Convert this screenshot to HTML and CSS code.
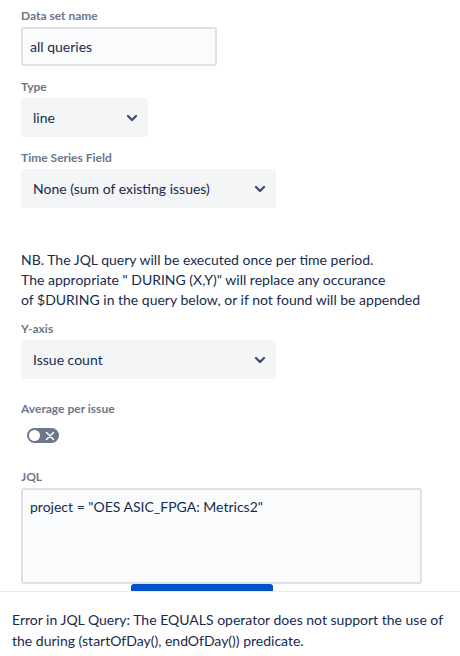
FILE: index.html
```html
<!DOCTYPE html>
<html>
<head>
<meta charset="utf-8">
<link rel="stylesheet" href="styles.css">
</head>
<body>
<div class="form">
  <div class="field first">
    <div class="label">Data set name</div>
    <div class="input">all queries</div>
  </div>
  <div class="field">
    <div class="label">Type</div>
    <div class="select narrow"><span>line</span><svg class="chev" width="24" height="24" viewBox="0 0 24 24"><path d="M8 10 L12 14 L16 10" fill="none" stroke="#42526e" stroke-width="2.4" stroke-linecap="round" stroke-linejoin="round"/></svg></div>
  </div>
  <div class="field">
    <div class="label">Time Series Field</div>
    <div class="select wide"><span>None (sum of existing issues)</span><svg class="chev" width="24" height="24" viewBox="0 0 24 24"><path d="M8 10 L12 14 L16 10" fill="none" stroke="#42526e" stroke-width="2.4" stroke-linecap="round" stroke-linejoin="round"/></svg></div>
  </div>
  <p class="note">NB. The JQL query will be executed once per time period.<br>The appropriate " DURING (X,Y)" will replace any occurance<br>of $DURING in the query below, or if not found will be appended</p>
  <div class="field yaxis">
    <div class="label">Y-axis</div>
    <div class="select wide"><span>Issue count</span><svg class="chev" width="24" height="24" viewBox="0 0 24 24"><path d="M8 10 L12 14 L16 10" fill="none" stroke="#42526e" stroke-width="2.4" stroke-linecap="round" stroke-linejoin="round"/></svg></div>
  </div>
  <div class="field avg">
    <div class="label">Average per issue</div>
    <div class="toggle-wrap">
      <span class="toggle"><span class="knob"></span><svg class="x" width="10" height="10" viewBox="0 0 10 10"><path d="M1.5 1.5 L8.5 8.5 M8.5 1.5 L1.5 8.5" stroke="#fff" stroke-width="1.6" stroke-linecap="round"/></svg></span>
    </div>
  </div>
  <div class="field jql">
    <div class="label">JQL</div>
    <div class="textarea">project = "OES ASIC_FPGA: Metrics2"</div>
  </div>
  <div class="btn-row"><span class="btn"></span></div>
</div>
<div class="footer">Error in JQL Query: The EQUALS operator does not support the use of the during (startOfDay(), endOfDay()) predicate.</div>
</body>
</html>
```
FILE: styles.css
```css
html, body {
  margin: 0;
  padding: 0;
  background: #ffffff;
}
body {
  font-family: "Lato", "Noto Sans", sans-serif;
  font-size: 14px;
  color: #172b4d;
  width: 460px;
  height: 656px;
  overflow: hidden;
}
.form {
  height: 591px;
  overflow: hidden;
  padding: 8px 21px 0;
  box-sizing: border-box;
}
.field {
  margin-top: 13px;
}
.field.first {
  margin-top: 0;
}
.label {
  font-size: 12px;
  line-height: 16px;
  font-weight: 700;
  color: #6b778c;
  margin-bottom: 3px;
}
.input {
  width: 196px;
  height: 39px;
  box-sizing: border-box;
  border: 2px solid #dfe1e6;
  border-radius: 3px;
  background: #fafbfc;
  padding: 0 7px;
  display: flex;
  align-items: center;
}
.select {
  height: 39px;
  box-sizing: border-box;
  border-radius: 3px;
  background: #f4f5f7;
  padding: 0 4px 0 12px;
  display: flex;
  align-items: center;
  justify-content: space-between;
}
.select.narrow { width: 127px; }
.select.wide { width: 255px; }
.chev { flex: none; }
.note {
  margin: 42px 0 0;
  line-height: 20px;
  color: #172b4d;
}
.field.yaxis { margin-top: 11px; }
.field.avg { margin-top: 22px; }
.toggle-wrap {
  padding: 7px 0 0 6px;
  height: 22px;
}
.toggle {
  display: inline-flex;
  align-items: center;
  justify-content: space-between;
  width: 32px;
  height: 15px;
  border-radius: 8px;
  background: #6b778c;
  padding: 0 4px 0 2px;
  box-sizing: border-box;
}
.knob {
  width: 11px;
  height: 11px;
  border-radius: 50%;
  background: #fff;
}
.field.jql { margin-top: 20px; }
.textarea {
  width: 401px;
  height: 96px;
  box-sizing: border-box;
  border: 2px solid #dfe1e6;
  border-radius: 3px;
  background: #fafbfc;
  padding: 7px 7px;
  line-height: 20px;
}
.btn-row {
  padding-left: 110px;
}
.btn {
  display: block;
  width: 142px;
  height: 32px;
  background: #0052cc;
  border-radius: 3px;
}
.footer {
  border-top: 1px solid #ebecf0;
  padding: 17px 12px 10px;
  line-height: 21px;
}
```
